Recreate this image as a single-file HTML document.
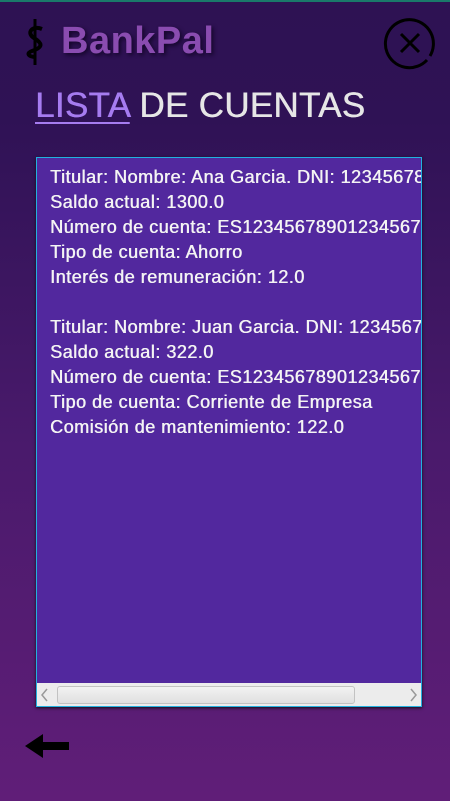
<!DOCTYPE html>
<html><head><meta charset="utf-8"><style>
html,body{margin:0;padding:0}
body{width:450px;height:801px;overflow:hidden;position:relative;background:linear-gradient(#2e1253 0px,#2f1255 120px,#4a1a6c 450px,#601e78 801px);font-family:"Liberation Sans",sans-serif}
.top{position:absolute;left:0;top:0;width:450px;height:2px;background:#1a7a6a}
.logo{position:absolute;left:61px;top:20px;font-size:38px;font-weight:bold;color:#8a4cb0;text-shadow:2px 2px 4px #14062a;letter-spacing:0.5px}
.title{position:absolute;left:35px;top:86px;font-size:35px;color:#e6e6e6;letter-spacing:0.3px;text-shadow:0.5px 0 0 #e6e6e6}
.title u{color:#a67cf0;text-shadow:0.5px 0 0 #a67cf0;text-decoration-thickness:2px;text-underline-offset:5px}
.box{position:absolute;left:36px;top:157px;width:384px;height:548px;background:#52289e;border:1px solid #22b0e0;box-shadow:0 1px 3px #111;overflow:hidden}
.txt{position:absolute;left:13px;top:7px;color:#f4f4f4;font-size:18px;line-height:25px;white-space:nowrap;letter-spacing:0.5px;text-shadow:0.5px 0 0 #f4f4f4}
.sb{position:absolute;left:0;bottom:0;width:384px;height:23px;background:#ececec}
.thumb{position:absolute;left:20px;top:3px;width:296px;height:16px;border:1px solid #c2c2c2;border-radius:3px;background:linear-gradient(#f2f2f2,#e0e0e0)}
</style></head><body>
<div class="top"></div>
<svg style="position:absolute;left:22px;top:17px" width="28" height="50" viewBox="0 0 28 50"><path d="M13 2 V48" stroke="#000" stroke-width="3"/><path d="M20 12 C10 8 4 16 12 21 C20 26 22 30 10 34 C4 36 6 40 14 40" stroke="#000" stroke-width="4" fill="none"/></svg>
<div class="logo">BankPal</div>
<svg style="position:absolute;left:383px;top:16px" width="54" height="54" viewBox="0 0 54 54"><path d="M44 44 A24 24 0 1 1 47 40" stroke="#000" stroke-width="3" fill="none"/><path d="M18 18 L36 36 M36 18 L18 36" stroke="#000" stroke-width="3"/></svg>
<div class="title"><u>LISTA</u> DE CUENTAS</div>
<div class="box">
<div class="txt">Titular: Nombre: Ana Garcia. DNI: 12345678A<br>Saldo actual: 1300.0<br>Número de cuenta: ES1234567890123456789<br>Tipo de cuenta: Ahorro<br>Interés de remuneración: 12.0<br><br>Titular: Nombre: Juan Garcia. DNI: 12345678B<br>Saldo actual: 322.0<br>Número de cuenta: ES1234567890123456789<br>Tipo de cuenta: Corriente de Empresa<br>Comisión de mantenimiento: 122.0</div>
<div class="sb"><div class="thumb"></div>
<svg style="position:absolute;left:3px;top:5px" width="10" height="14"><path d="M7 1 L2 7 L7 13" stroke="#999" stroke-width="1.5" fill="none"/></svg>
<svg style="position:absolute;right:3px;top:5px" width="10" height="14"><path d="M3 1 L8 7 L3 13" stroke="#999" stroke-width="1.5" fill="none"/></svg>
</div></div>
<svg style="position:absolute;left:25px;top:734px" width="46" height="26"><path d="M0 12 L18 0 V8 H44 V16 H18 V24 Z" fill="#000"/></svg>
</body></html>
